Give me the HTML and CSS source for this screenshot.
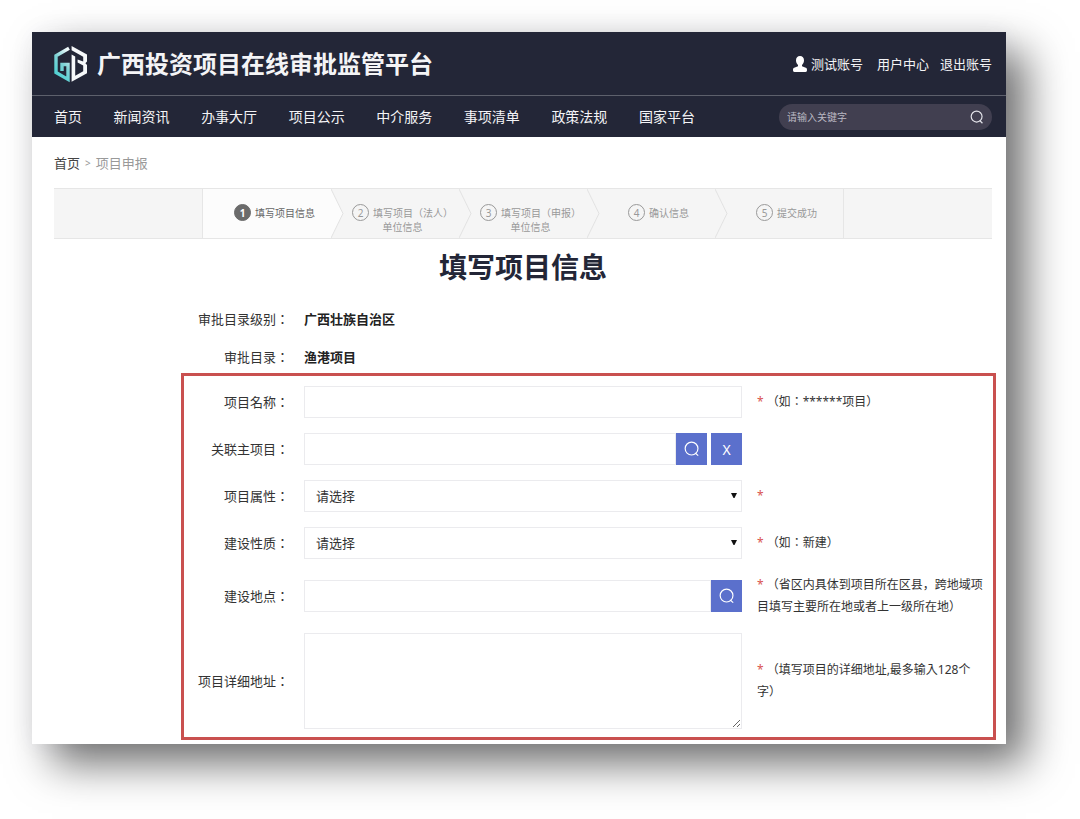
FILE: index.html
```html
<!DOCTYPE html>
<html lang="zh-CN">
<head>
<meta charset="utf-8">
<meta name="viewport" content="width=device-width, initial-scale=1">
<title>填写项目信息</title>
<link rel="stylesheet" href="styles.css">
</head>
<body>
<div class="page">
  <header class="header">
    <div class="brand-bar">
      <a class="brand" href="#">
        <svg class="logo" viewBox="0 0 36 38" aria-hidden="true">
          <defs>
            <linearGradient id="g" x1="0.8" y1="0" x2="0.3" y2="1">
              <stop offset="0" stop-color="#f2fbfc"/>
              <stop offset="0.5" stop-color="#7fd3d6"/>
              <stop offset="1" stop-color="#4fd0d2"/>
            </linearGradient>
          </defs>
          <path d="M16 3.200 3 10.800v16.600l12 7V19.500H9v6.500" fill="none" stroke="url(#g)" stroke-width="3.400"/>
          <path d="M18.600 1 34 9.600v6.800l-1.600 1.800 1.600 1.800v8.200l-15.400 8.600V9.600l3.600 2v19.200l8-4.500v-5.700l-5.600-3v-3.200l5.600 2v-4.600L18.600 5.200z" fill="#f6f8fa"/>
        </svg>
        <span class="brand-name">广西投资项目在线审批监管平台</span>
      </a>
      <div class="account">
        <a class="user" href="#">
          <svg class="user-icon" viewBox="0 0 14 16" aria-hidden="true"><path d="M7 0c2.500 0 4 1.800 4 4.300 0 2-.8 3.700-2 4.700v1.300l3.800 1.500c.9.4 1.200 1 1.200 2.200 0 1.300-.4 2-1.500 2h-11C.4 16 0 15.300 0 14c0-1.200.3-1.800 1.200-2.200L5 10.300V9C3.800 8 3 6.300 3 4.300 3 1.800 4.500 0 7 0z" fill="#fff"/></svg>
          <span>测试账号</span>
        </a>
        <a href="#">用户中心</a>
        <a href="#">退出账号</a>
      </div>
    </div>
    <div class="nav-bar">
      <nav class="nav">
        <a href="#">首页</a>
        <a href="#">新闻资讯</a>
        <a href="#">办事大厅</a>
        <a href="#">项目公示</a>
        <a href="#">中介服务</a>
        <a href="#">事项清单</a>
        <a href="#">政策法规</a>
        <a href="#">国家平台</a>
      </nav>
      <form class="search">
        <input class="search-input" type="text" placeholder="请输入关键字" aria-label="请输入关键字">
        <button class="search-button" type="button" aria-label="搜索">
          <svg class="icon-small" viewBox="0 0 18 18" aria-hidden="true"><circle cx="8.500" cy="8.500" r="7" fill="none" stroke="currentColor" stroke-width="1.500"/><path d="M12.500 13.500 16 17" stroke="currentColor" stroke-width="1.500"/></svg>
        </button>
      </form>
    </div>
  </header>

  <main class="main">
    <nav class="breadcrumb">
      <a href="#">首页</a>
      <span class="separator">&gt;</span>
      <span>项目申报</span>
    </nav>

    <div class="steps-bar">
      <ol class="steps">
        <li class="step current">
          <div class="step-line"><span class="number">1</span><span>填写项目信息</span></div>
          <svg class="chevron" viewBox="0 0 13 50" preserveAspectRatio="none" aria-hidden="true"><path d="M0 0 12 25 0 50" /></svg>
        </li>
        <li class="step">
          <div class="step-line"><span class="number">2</span><span class="cjk">填写项目（法人）</span></div>
          <div class="step-more">单位信息</div>
          <svg class="chevron" viewBox="0 0 13 50" preserveAspectRatio="none" aria-hidden="true"><path d="M0 0 12 25 0 50" /></svg>
        </li>
        <li class="step">
          <div class="step-line"><span class="number">3</span><span class="cjk">填写项目（申报）</span></div>
          <div class="step-more">单位信息</div>
          <svg class="chevron" viewBox="0 0 13 50" preserveAspectRatio="none" aria-hidden="true"><path d="M0 0 12 25 0 50" /></svg>
        </li>
        <li class="step">
          <div class="step-line"><span class="number">4</span><span>确认信息</span></div>
          <svg class="chevron" viewBox="0 0 13 50" preserveAspectRatio="none" aria-hidden="true"><path d="M0 0 12 25 0 50" /></svg>
        </li>
        <li class="step">
          <div class="step-line"><span class="number">5</span><span>提交成功</span></div>
        </li>
      </ol>
    </div>

    <h1 class="title">填写项目信息</h1>

    <form class="form cjk" lang="zh-TW">
      <dl class="summary">
        <div class="row"><dt class="label">审批目录级别：</dt><dd class="value">广西壮族自治区</dd></div>
        <div class="row"><dt class="label">审批目录：</dt><dd class="value">渔港项目</dd></div>
      </dl>

      <div class="required-fields">
        <div class="row">
          <label class="label" for="name">项目名称：</label>
          <input class="control" id="name" type="text">
          <p class="note"><span class="star">*</span>（如：******项目）</p>
        </div>
        <div class="row">
          <label class="label" for="parent">关联主项目：</label>
          <div class="control-group">
            <input class="control" id="parent" type="text">
            <button class="square" type="button" aria-label="搜索">
              <svg class="icon" viewBox="0 0 18 18" aria-hidden="true"><circle cx="8.500" cy="8.500" r="7.200" fill="none" stroke="currentColor" stroke-width="1.300"/><path d="M12.500 13.500 16 16.500" stroke="currentColor" stroke-width="1.300"/></svg>
            </button>
            <button class="square spaced" type="button">X</button>
          </div>
        </div>
        <div class="row">
          <label class="label" for="attribute">项目属性：</label>
          <div class="select-box">
            <select class="control" id="attribute"><option>请选择</option></select>
            <svg class="arrow" viewBox="0 0 6 5" aria-hidden="true"><path d="M0 0h6L3.500 5h-1z"/></svg>
          </div>
          <p class="note"><span class="star">*</span></p>
        </div>
        <div class="row">
          <label class="label" for="nature">建设性质：</label>
          <div class="select-box">
            <select class="control" id="nature"><option>请选择</option></select>
            <svg class="arrow" viewBox="0 0 6 5" aria-hidden="true"><path d="M0 0h6L3.500 5h-1z"/></svg>
          </div>
          <p class="note"><span class="star">*</span>（如：新建）</p>
        </div>
        <div class="row">
          <label class="label" for="place">建设地点：</label>
          <div class="control-group">
            <input class="control" id="place" type="text">
            <button class="square" type="button" aria-label="搜索">
              <svg class="icon" viewBox="0 0 18 18" aria-hidden="true"><circle cx="8.500" cy="8.500" r="7.200" fill="none" stroke="currentColor" stroke-width="1.300"/><path d="M12.500 13.500 16 16.500" stroke="currentColor" stroke-width="1.300"/></svg>
            </button>
          </div>
          <p class="note simplified" lang="zh-CN"><span class="star">*</span>（省区内具体到项目所在区县，跨地域项目填写主要所在地或者上一级所在地）</p>
        </div>
        <div class="row">
          <label class="label" for="address">项目详细地址：</label>
          <textarea class="control area" id="address"></textarea>
          <p class="note"><span class="star">*</span>（填写项目的详细地址,最多输入128个字）</p>
        </div>
      </div>
    </form>
  </main>
</div>
</body>
</html>
```

FILE: styles.css
```css
* {
  box-sizing: border-box;
}

body {
  margin: 0;
  padding: 32px 74px 75px 32px;
  background: #fff;
  color: #333;
  font-family: "Noto Sans", "Noto Sans CJK SC", sans-serif;
  font-size: 13px;
}

a {
  color: inherit;
  text-decoration: none;
}

input,
select,
textarea,
button {
  font: inherit;
  color: inherit;
}

.cjk {
  font-family: "Noto Sans", "Noto Sans CJK TC", sans-serif;
}

.simplified {
  font-family: "Noto Sans", "Noto Sans CJK SC", sans-serif;
}

.page {
  background: #fff;
  box-shadow: 20px 20px 40px rgba(0, 0, 0, 0.56), 0 0 24px rgba(60, 60, 110, 0.05);
}

/* Header */
.header {
  background: #232637;
  color: #f4f4f6;
}

.brand-bar {
  display: flex;
  align-items: center;
  justify-content: space-between;
  height: 64px;
  padding: 0 14px 0 21px;
  border-bottom: 1px solid #5d606c;
}

.brand {
  display: flex;
  align-items: center;
  gap: 8px;
}

.logo {
  width: 36px;
  height: 38px;
}

.brand-name {
  font-size: 24px;
  font-weight: 700;
  line-height: 32px;
}

.account {
  display: flex;
  align-items: center;
  gap: 11px;
  line-height: 20px;
}

.user {
  display: flex;
  align-items: center;
  gap: 4px;
  margin-right: 3px;
}

.user-icon {
  width: 14px;
  height: 16px;
}

.nav-bar {
  display: flex;
  align-items: center;
  justify-content: space-between;
  height: 41px;
  padding: 0 14px 0 22px;
}

.nav {
  display: flex;
  flex: 0 1 641px;
  justify-content: space-between;
  font-size: 14px;
  line-height: 20px;
}

.search {
  display: flex;
  align-items: center;
  width: 213px;
  height: 26px;
  padding: 0 8px;
  border-radius: 13px;
  background: #413f50;
}

.search-input {
  flex: 1;
  min-width: 0;
  padding: 0;
  border: 0;
  outline: 0;
  background: none;
  font-size: 10px;
}

.search-input::placeholder {
  color: #b9b8c2;
}

.search-button {
  display: flex;
  padding: 0;
  border: 0;
  background: none;
  color: #e4e4ea;
}

.icon-small {
  width: 14px;
  height: 14px;
}

/* Content */
.main {
  padding: 16px 0 4px;
}

.breadcrumb {
  display: flex;
  gap: 5px;
  padding: 0 22px;
  color: #999;
  line-height: 20px;
}

.breadcrumb a {
  color: #444;
}

.separator {
  font-size: 10px;
}

.steps-bar {
  display: flex;
  justify-content: center;
  margin: 15px 14px 0 22px;
  border: solid #e6e6e6;
  border-width: 1px 0;
  background: #f5f5f5;
}

.steps {
  display: flex;
  flex: 0 1 642px;
  margin: 0;
  padding: 0;
  border: solid #e6e6e6;
  border-width: 0 1px;
  list-style: none;
}

.step {
  position: relative;
  flex: 1;
  height: 49px;
  padding: 15px 0 0 15px;
  background: #f5f5f5;
  color: #999;
  font-size: 10px;
  line-height: 12px;
  text-align: center;
}

.step-line {
  display: flex;
  align-items: center;
  justify-content: center;
  gap: 4px;
  height: 17px;
  white-space: nowrap;
}

.number {
  display: flex;
  align-items: center;
  justify-content: center;
  width: 17px;
  height: 17px;
  border: 1px solid #999;
  border-radius: 50%;
}

.current {
  background: #fcfcfc;
  color: #666;
}

.current .number {
  border-color: #6b6b6b;
  background: #6b6b6b;
  color: #fff;
  font-weight: 700;
}

.chevron {
  position: absolute;
  z-index: 1;
  top: 0;
  right: -13px;
  width: 13px;
  height: 49px;
  fill: #f5f5f5;
  stroke: #e2e2e2;
}

.current .chevron {
  fill: #fcfcfc;
}

.title {
  margin: 8px 14px 0 22px;
  color: #232637;
  font-size: 28px;
  font-weight: 700;
  line-height: 40px;
  text-align: center;
}

/* Form */
.form {
  padding: 10px 10px 0 149px;
}

.summary {
  margin: 0;
  padding: 0 3px;
}

.row {
  display: grid;
  grid-template-columns: 105px minmax(0, 1fr) 228px;
  column-gap: 15px;
  align-items: center;
}

.summary .row {
  height: 43px;
}

.summary .row:last-child {
  height: 33px;
}

.label {
  text-align: right;
  line-height: 20px;
}

.value {
  margin: 0;
  color: #222;
  font-weight: 700;
}

.required-fields {
  display: grid;
  gap: 15px;
  padding: 10px 0 8px;
  border: 3px solid #c9504f;
}

.required-fields .row {
  padding-right: 8px;
}

.control {
  display: block;
  width: 100%;
  height: 32px;
  margin: 0;
  padding: 0 11px;
  border: 1px solid #ebebee;
  border-radius: 0;
  outline: 0;
  background: #fff;
}

.area {
  height: 96px;
  padding: 8px 11px;
}

.control-group {
  display: flex;
}

.control-group .control {
  flex: 1;
  width: auto;
  min-width: 0;
}

.square {
  display: flex;
  align-items: center;
  justify-content: center;
  width: 31px;
  height: 32px;
  padding: 0;
  border: 0;
  background: #5b70cc;
  color: #fff;
  font-size: 14px;
}

.spaced {
  margin-left: 4px;
}

.icon {
  width: 16px;
  height: 16px;
}

.select-box {
  position: relative;
}

.select-box .control {
  appearance: none;
}

.arrow {
  position: absolute;
  top: 13px;
  right: 5px;
  width: 6px;
  height: 5px;
  fill: #111;
  pointer-events: none;
}

.note {
  margin: 0;
  font-size: 12px;
  line-height: 22px;
}

.star {
  margin-right: 3px;
  color: #d9534f;
}
```
